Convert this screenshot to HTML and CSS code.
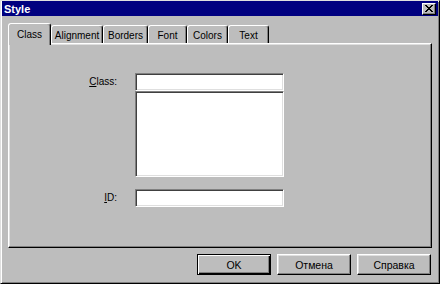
FILE: index.html
```html
<!DOCTYPE html>
<html>
<head>
<meta charset="utf-8">
<link rel="stylesheet" href="styles.css">
</head>
<body>
<div class="window">
  <div class="titlebar">
    <span class="title">Style</span>
    <button class="close" aria-label="Close">
      <svg width="8" height="7" viewBox="0 0 8 7"><path d="M0 0h2v1h1v1h2V1h1V0h2v1H7v1H6v1H5v1h1v1h1v1h1v1H6V6H5V5H3v1H2v1H0V6h1V5h1V4h1V3H2V2H1V1H0z" fill="#000"/></svg>
    </button>
  </div>
  <div class="body">
    <div class="tabs">
      <div class="tab active w-class">Class</div>
      <div class="tab w-align">Alignment</div>
      <div class="tab w-borders">Borders</div>
      <div class="tab w-font">Font</div>
      <div class="tab w-colors">Colors</div>
      <div class="tab w-text">Text</div>
    </div>
    <div class="panel">
      <div class="form">
        <label class="lbl"><u>C</u>lass:</label>
        <div class="field"></div>
        <div></div>
        <div class="listbox"></div>
        <label class="lbl id-lbl"><u>I</u>D:</label>
        <div class="field id-field"></div>
      </div>
    </div>
    <div class="buttons">
      <button class="btn default">OK</button>
      <button class="btn">Отмена</button>
      <button class="btn">Справка</button>
    </div>
  </div>
</div>
</body>
</html>
```
FILE: styles.css
```css
html, body {
  margin: 0;
  padding: 0;
  background: #bdbdbd;
}
body {
  font-family: "Liberation Sans", Arial, sans-serif;
  font-size: 10px;
  color: #000;
}
.window {
  width: 440px;
  height: 284px;
  box-sizing: border-box;
  background: #bdbdbd;
  border: 1px solid;
  border-color: #dfdfdf #000 #000 #dfdfdf;
  box-shadow: inset 1px 1px #fff, inset -1px -1px #808080;
  padding: 0 1px 1px 1px;
  display: flex;
  flex-direction: column;
}
.titlebar {
  height: 15px;
  background: #000080;
  color: #fff;
  display: flex;
  align-items: center;
  justify-content: space-between;
  padding: 0 2px 0 2px;
}
.title {
  font-weight: bold;
  font-size: 11px;
}
.close {
  width: 14px;
  height: 12px;
  padding: 0;
  margin: 0;
  box-sizing: border-box;
  background: #bdbdbd;
  border: 1px solid;
  border-color: #fff #000 #000 #fff;
  box-shadow: inset -1px -1px #808080;
  display: flex;
  align-items: center;
  justify-content: center;
}
.close svg { display: block; }
.body {
  padding: 7px 6px 0 6px;
  display: flex;
  flex-direction: column;
}
.tabs {
  display: flex;
  align-items: flex-end;
  height: 20px;
  position: relative;
  z-index: 1;
}
.tab {
  box-sizing: border-box;
  height: 18px;
  border: 1px solid;
  border-bottom: none;
  border-color: #fff #000 transparent #fff;
  box-shadow: inset -1px 0 #808080;
  border-radius: 3px 3px 0 0;
  display: flex;
  align-items: center;
  justify-content: center;
  padding-top: 1px;
  background: #bdbdbd;
}
.tab.active {
  height: 22px;
  margin-bottom: -2px;
  padding-bottom: 2px;
}
.w-class { width: 43px; }
.w-align { width: 52px; }
.w-borders { width: 45px; }
.w-font { width: 39px; }
.w-colors { width: 41px; }
.w-text { width: 41px; }
.panel {
  width: 424px;
  height: 205px;
  box-sizing: border-box;
  border: 1px solid;
  border-color: #fff #000 #000 #fff;
  box-shadow: inset -1px -1px #808080, inset 1px 1px #dfdfdf;
}
.form {
  display: grid;
  grid-template-columns: 107px 149px;
  grid-template-rows: 18px 86px auto;
  column-gap: 18px;
  padding: 29px 0 0 1px;
}
.lbl {
  text-align: right;
  align-self: center;
  line-height: 18px;
}
.id-lbl, .id-field { margin-top: 12px; }
.field, .listbox {
  box-sizing: border-box;
  background: #fff;
  border: 1px solid;
  border-color: #808080 #fff #fff #808080;
  box-shadow: inset 1px 1px #404040, inset -1px -1px #dfdfdf;
}
.id-field { height: 18px; }
.buttons {
  display: flex;
  justify-content: flex-end;
  gap: 6px;
  margin-top: 6px;
  padding-right: 1px;
}
.btn {
  width: 74px;
  height: 21px;
  box-sizing: border-box;
  background: #bdbdbd;
  border: 1px solid;
  border-color: #fff #000 #000 #fff;
  box-shadow: inset -1px -1px #808080, inset 1px 1px #dfdfdf;
  font-family: "Liberation Sans", Arial, sans-serif;
  font-size: 10.5px;
  color: #000;
  padding: 0;
  margin: 0;
}
.btn.default {
  border: 1px solid #000;
  box-shadow: inset 1px 1px #fff, inset -1px -1px #000, inset -2px -2px #808080;
}
```
